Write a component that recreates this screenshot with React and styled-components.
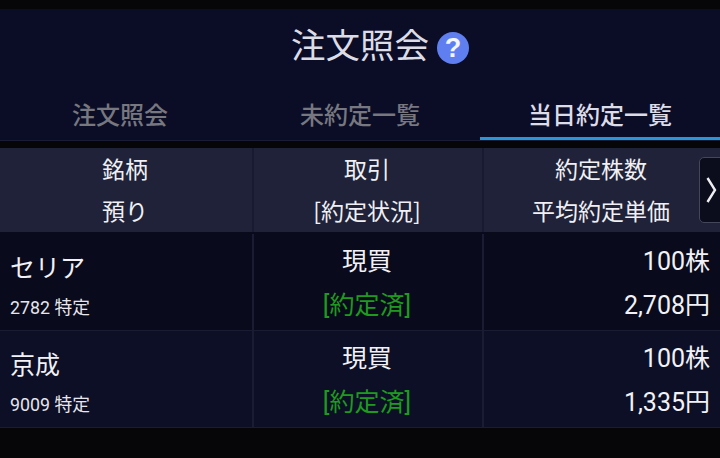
import React from "react";
import styled, { createGlobalStyle } from "styled-components";

const GlobalStyle = createGlobalStyle`
  html, body {
    margin: 0;
    padding: 0;
    background: #060608;
  }
  body {
    font-family: "Noto Sans CJK JP", "Noto Sans", sans-serif;
  }
`;

const Page = styled.div`
  width: 720px;
  height: 458px;
  padding-top: 9px;
  box-sizing: border-box;
  overflow: hidden;
  background: #060608;
`;

const TopPanel = styled.div`
  height: 132px;
  background: #0b0d26;
  box-sizing: border-box;
  border-bottom: 1px solid #1a1c33;
`;

const TitleBar = styled.div`
  height: 72px;
  display: flex;
  align-items: flex-start;
  justify-content: center;
  gap: 8px;
  padding-left: 40px;
`;

const Title = styled.h1`
  margin: 0;
  font-size: 34.5px;
  line-height: 68px;
  font-weight: 400;
  color: #dcdce6;
`;

const HelpBadge = styled.span`
  width: 32px;
  height: 32px;
  margin-top: 23px;
  border-radius: 50%;
  background: #5f7ff0;
  color: #f4f6ff;
  font-family: "Liberation Sans", sans-serif;
  font-size: 27px;
  font-weight: 700;
  line-height: 32px;
  text-align: center;
`;

const Tabs = styled.div`
  display: grid;
  grid-template-columns: 240px 240px 240px;
  height: 59px;
`;

const Tab = styled.div`
  text-align: center;
  font-size: 24px;
  line-height: 30px;
  height: 59px;
  padding-top: 18px;
  box-sizing: border-box;
  font-weight: 500;
  color: ${(p) => (p.$active ? "#dcdce8" : "#77777f")};
  border-bottom: 3px solid ${(p) => (p.$active ? "#2a95d8" : "transparent")};
`;

const HeadRow = styled.div`
  display: grid;
  grid-template-columns: 252px 230px 238px;
  height: 84px;
  margin-top: 7px;
  background: #1f2238;
  position: relative;
`;

const HeadCell = styled.div`
  display: flex;
  flex-direction: column;
  align-items: center;
  padding-right: 2px;
  box-sizing: border-box;
  border-left: ${(p) => (p.$first ? "none" : "2px solid #181a30")};
`;

const HeadLine = styled.div`
  font-size: 23px;
  line-height: 42px;
  margin-top: -1px;
  margin-bottom: 1px;
  color: #f0f0f4;
  white-space: nowrap;
`;

const ScrollButton = styled.div`
  position: absolute;
  right: -1px;
  top: 9px;
  width: 22px;
  height: 66px;
  padding-left: 3px;
  box-sizing: border-box;
  border: 1px solid #44465a;
  border-radius: 5px 0 0 5px;
  background: #0b0c1c;
  display: flex;
  align-items: center;
  justify-content: center;
`;

const Rows = styled.div`
  padding-top: 2px;
  background: #090a1b;
`;

const DataRow = styled.div`
  display: grid;
  grid-template-columns: 252px 230px 238px;
  height: 97px;
  background: ${(p) => (p.$odd ? "#0c0f26" : "#090a1b")};
  border-bottom: 1px solid #1a1c33;
  box-sizing: border-box;
`;

const NameCell = styled.div`
  padding: 13px 0 0 10px;
  box-sizing: border-box;
`;

const StockName = styled.div`
  font-size: 25px;
  line-height: 38px;
  color: #f2f2f6;
`;

const StockCode = styled.div`
  font-size: 17.8px;
  line-height: 26px;
  margin-top: 10px;
  color: #e6e6ec;
  font-family: "Roboto", "Noto Sans CJK JP", sans-serif;
`;

const TradeCell = styled.div`
  border-left: 2px solid #1a1c33;
  display: flex;
  flex-direction: column;
  align-items: center;
  padding: 6px 2px 0 0;
  box-sizing: border-box;
`;

const AmountCell = styled.div`
  border-left: 2px solid #1a1c33;
  display: flex;
  flex-direction: column;
  align-items: flex-end;
  padding: 6px 10px 0 0;
  box-sizing: border-box;
`;

const Value = styled.div`
  font-size: 25px;
  line-height: 44px;
  color: ${(p) => (p.$green ? "#1e9a1e" : "#f2f2f6")};
  white-space: nowrap;
  font-family: "Roboto", "Noto Sans CJK JP", sans-serif;
`;

const orders = [
  { name: "セリア", code: "2782 特定", shares: "100株", price: "2,708円" },
  { name: "京成", code: "9009 特定", shares: "100株", price: "1,335円" },
];

const App = () => (
  <Page>
    <GlobalStyle />
    <TopPanel>
      <TitleBar>
        <Title>注文照会</Title>
        <HelpBadge>?</HelpBadge>
      </TitleBar>
      <Tabs>
        <Tab>注文照会</Tab>
        <Tab>未約定一覧</Tab>
        <Tab $active>当日約定一覧</Tab>
      </Tabs>
    </TopPanel>
    <HeadRow>
      <HeadCell $first>
        <HeadLine>銘柄</HeadLine>
        <HeadLine>預り</HeadLine>
      </HeadCell>
      <HeadCell>
        <HeadLine>取引</HeadLine>
        <HeadLine>[約定状況]</HeadLine>
      </HeadCell>
      <HeadCell>
        <HeadLine>約定株数</HeadLine>
        <HeadLine>平均約定単価</HeadLine>
      </HeadCell>
      <ScrollButton>
        <svg width="11" height="26" viewBox="0 0 11 26" fill="none">
          <path d="M1.5 1 L9 13 L1.5 25" stroke="#eeeef2" strokeWidth="2.4" />
        </svg>
      </ScrollButton>
    </HeadRow>
    <Rows>
      {orders.map((o, i) => (
        <DataRow key={o.code} $odd={i % 2 === 1}>
          <NameCell>
            <StockName>{o.name}</StockName>
            <StockCode>{o.code}</StockCode>
          </NameCell>
          <TradeCell>
            <Value>現買</Value>
            <Value $green>[約定済]</Value>
          </TradeCell>
          <AmountCell>
            <Value>{o.shares}</Value>
            <Value>{o.price}</Value>
          </AmountCell>
        </DataRow>
      ))}
    </Rows>
  </Page>
);

export default App;
